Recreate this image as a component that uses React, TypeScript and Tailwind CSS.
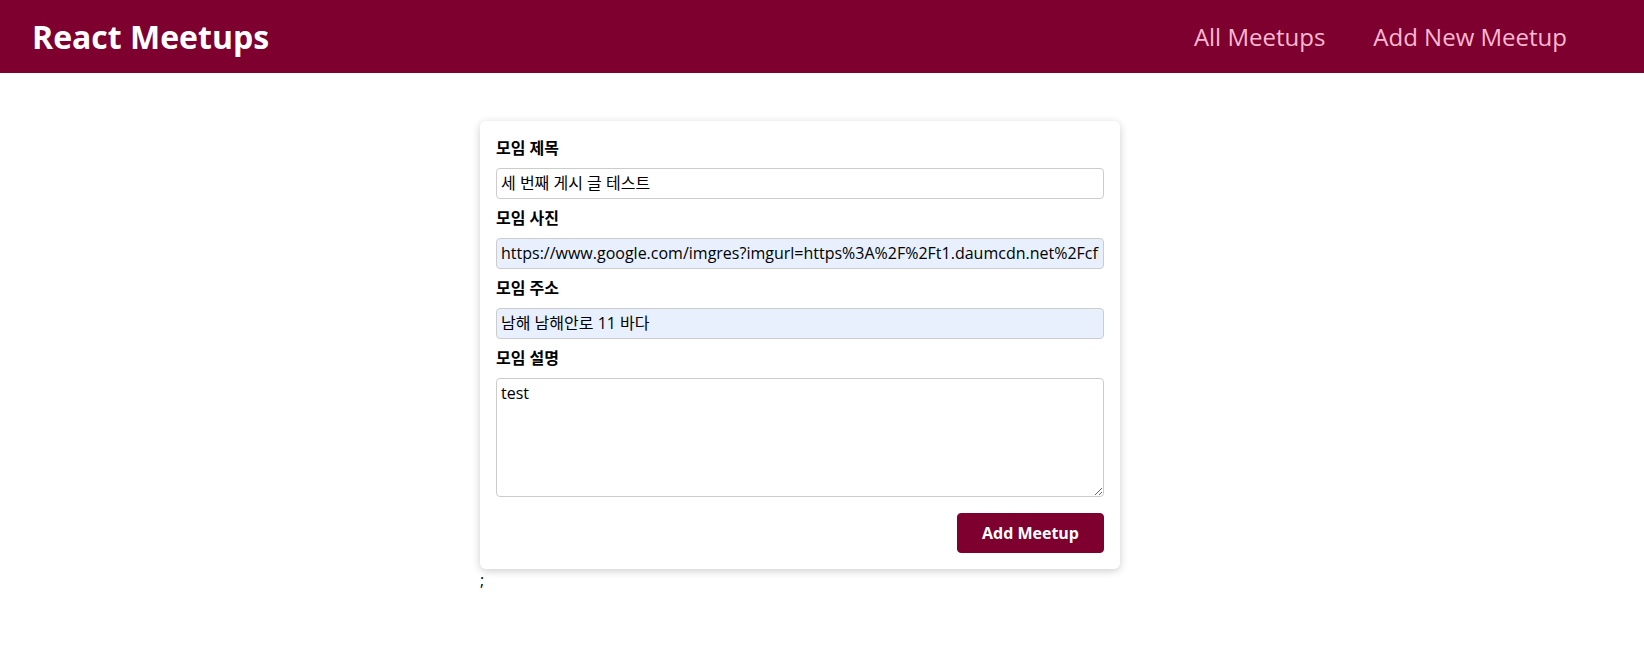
import React from 'react'

const font = { fontFamily: '"Open Sans", "Noto Sans CJK KR", sans-serif' }

function Field({ label, children }: { label: string; children: React.ReactNode }) {
  return (
    <div className="mb-2">
      <label className="block font-bold mb-2 leading-[23px]">{label}</label>
      {children}
    </div>
  )
}

export default function App() {
  const inputCls = 'block w-full rounded-[4px] border border-[#ccc] p-1 text-base leading-[21px] text-black outline-none'

  return (
    <div className="min-h-screen bg-white text-black" style={font}>
      <header className="h-[73px] w-full flex items-center justify-between bg-[#7d002f] pl-8 pr-[77px]">
        <div className="text-[32px] font-bold text-white">React Meetups</div>
        <nav>
          <ul className="flex items-baseline">
            <li className="ml-12">
              <a href="#" className="text-2xl text-[#fcb8d2]">All Meetups</a>
            </li>
            <li className="ml-12">
              <a href="#" className="text-2xl text-[#fcb8d2]">Add New Meetup</a>
            </li>
          </ul>
        </nav>
      </header>

      <main className="mt-12 ml-[480px] w-[640px] text-base leading-[22px]">
        <div className="rounded-[6px] bg-white shadow-[0_2px_8px_rgba(0,0,0,0.2)]">
          <form className="p-4" onSubmit={(e) => e.preventDefault()}>
            <Field label="모임 제목">
              <input className={`${inputCls} bg-white`} defaultValue="세 번째 게시 글 테스트" style={font} />
            </Field>
            <Field label="모임 사진">
              <input
                className={`${inputCls} bg-[#e8f0fe]`}
                defaultValue="https://www.google.com/imgres?imgurl=https%3A%2F%2Ft1.daumcdn.net%2Fcfile%2Ftistory"
                style={font}
              />
            </Field>
            <Field label="모임 주소">
              <input className={`${inputCls} bg-[#e8f0fe]`} defaultValue="남해 남해안로 11 바다" style={font} />
            </Field>
            <Field label="모임 설명">
              <textarea rows={5} className={`${inputCls} h-[119px] bg-white resize-y`} defaultValue="test" style={font} />
            </Field>
            <div className="mt-4 flex justify-end">
              <button className="h-10 rounded-[4px] border border-[#7d002f] bg-[#7d002f] px-6 font-bold text-white leading-[22px]" style={font}>
                Add Meetup
              </button>
            </div>
          </form>
        </div>
        <div>;</div>
      </main>
    </div>
  )
}
